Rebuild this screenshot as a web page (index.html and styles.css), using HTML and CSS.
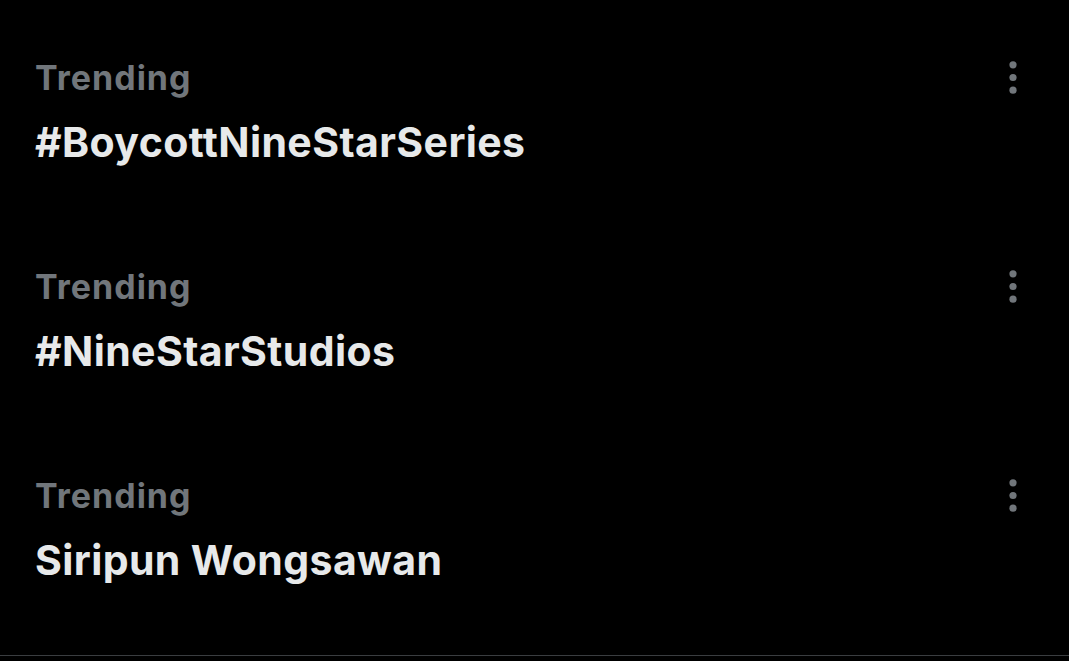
FILE: index.html
```html
<!DOCTYPE html>
<html lang="en">
<head>
<meta charset="utf-8">
<title>Trending</title>
<link rel="stylesheet" href="styles.css">
</head>
<body>
<main class="trends">
  <section class="trend">
    <div class="trend-text">
      <div class="trend-label">Trending</div>
      <div class="trend-title">#BoycottNineStarSeries</div>
    </div>
    <button class="more" aria-label="More">
      <svg viewBox="0 0 8 33" width="8" height="33"><circle cx="4" cy="3.8" r="3.6"/><circle cx="4" cy="16.5" r="3.6"/><circle cx="4" cy="29.2" r="3.6"/></svg>
    </button>
  </section>
  <section class="trend">
    <div class="trend-text">
      <div class="trend-label">Trending</div>
      <div class="trend-title">#NineStarStudios</div>
    </div>
    <button class="more" aria-label="More">
      <svg viewBox="0 0 8 33" width="8" height="33"><circle cx="4" cy="3.8" r="3.6"/><circle cx="4" cy="16.5" r="3.6"/><circle cx="4" cy="29.2" r="3.6"/></svg>
    </button>
  </section>
  <section class="trend">
    <div class="trend-text">
      <div class="trend-label">Trending</div>
      <div class="trend-title">Siripun Wongsawan</div>
    </div>
    <button class="more" aria-label="More">
      <svg viewBox="0 0 8 33" width="8" height="33"><circle cx="4" cy="3.8" r="3.6"/><circle cx="4" cy="16.5" r="3.6"/><circle cx="4" cy="29.2" r="3.6"/></svg>
    </button>
  </section>
</main>
</body>
</html>
```
FILE: styles.css
```css
html, body {
  margin: 0;
  padding: 0;
  background: #000;
  height: 100%;
}
body {
  font-family: "Inter", "Lato", sans-serif;
  overflow: hidden;
}
.trends {
  height: 655px;
  border-bottom: 1px solid #3a3d40;
  display: flex;
  flex-direction: column;
}
.trend {
  display: flex;
  justify-content: space-between;
  align-items: flex-start;
  padding: 58px 52px 0 35px;
  height: 209px;
  box-sizing: border-box;
}
.trend-label {
  color: #71767b;
  font-weight: 700;
  font-size: 34px;
  line-height: 40px;
  letter-spacing: 1px;
}
.trend-title {
  color: #e7e9ea;
  font-weight: 700;
  font-size: 41px;
  line-height: 48px;
  margin-top: 20px;
  letter-spacing: 0.4px;
}
.more {
  background: none;
  border: 0;
  padding: 0;
  margin-top: 3px;
  fill: #71767b;
  display: flex;
}
```
